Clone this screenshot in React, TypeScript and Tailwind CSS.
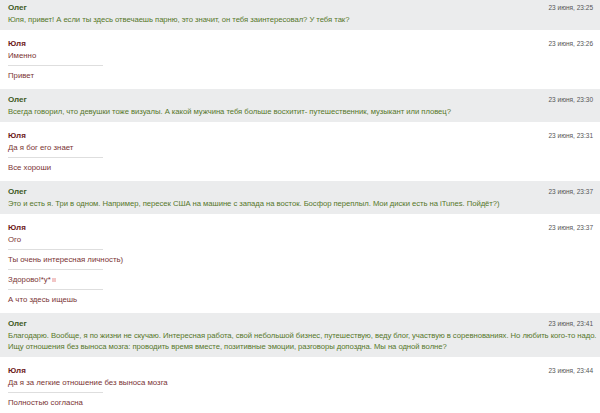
import React from 'react';

type Msg = {
  who: 'oleg' | 'yulia';
  date: string;
  lines: React.ReactNode[];
};

const messages: Msg[] = [
  { who: 'oleg', date: '23 июня, 23:25', lines: ['Юля, привет! А если ты здесь отвечаешь парню, это значит, он тебя заинтересовал? У тебя так?'] },
  { who: 'yulia', date: '23 июня, 23:26', lines: ['Именно', 'Привет'] },
  { who: 'oleg', date: '23 июня, 23:30', lines: ['Всегда говорил, что девушки тоже визуалы. А какой мужчина тебя больше восхитит- путешественник, музыкант или пловец?'] },
  { who: 'yulia', date: '23 июня, 23:31', lines: ['Да я бог его знает', 'Все хороши'] },
  { who: 'oleg', date: '23 июня, 23:37', lines: ['Это и есть я. Три в одном. Например, пересек США на машине с запада на восток. Босфор переплыл. Мои диски есть на iTunes. Пойдёт?)'] },
  {
    who: 'yulia',
    date: '23 июня, 23:37',
    lines: [
      'Ого',
      'Ты очень интересная личность)',
      <>
        Здорово!*у*
        <span className="inline-block w-[4px] h-[4px] bg-[#f2c6c6] ml-[1px] align-middle" />
      </>,
      'А что здесь ищешь',
    ],
  },
  {
    who: 'oleg',
    date: '23 июня, 23:41',
    lines: [
      'Благодарю. Вообще, я по жизни не скучаю. Интересная работа, свой небольшой бизнес, путешествую, веду блог, участвую в соревнованиях. Но любить кого-то надо.',
      'Ищу отношения без выноса мозга: проводить время вместе, позитивные эмоции, разговоры допоздна. Мы на одной волне?',
    ],
  },
  { who: 'yulia', date: '23 июня, 23:44', lines: ['Да я за легкие отношение без выноса мозга', 'Полностью согласна'] },
];

const Header = ({ name, date, color }: { name: string; date: string; color: string }) => (
  <div className="flex items-center justify-between h-[11px]">
    <span className={`font-bold text-[8px] ${color}`}>{name}</span>
    <span className="text-[6.5px] text-[#555]">{date}</span>
  </div>
);

const Message = ({ msg }: { msg: Msg }) => {
  if (msg.who === 'oleg') {
    return (
      <div className="bg-[#ebeced] pl-[8px] pr-[7px] pt-[5px] pb-[5px]">
        <Header name="Олег" date={msg.date} color="text-[#3e5a1e]" />
        <div className="mt-[1px] text-[7.7px] leading-[11px] text-[#56772a] tracking-[-0.05px]">
          {msg.lines.map((l, i) => (
            <div key={i} className="whitespace-nowrap">{l}</div>
          ))}
        </div>
      </div>
    );
  }
  return (
    <div className="bg-white pl-[8px] pr-[7px] pt-[8px] pb-[8px]">
      <Header name="Юля" date={msg.date} color="text-[#6e1c1c]" />
      <div className="mt-[1px] text-[7.8px] leading-[11px] text-[#7a3434]">
        {msg.lines.map((l, i) => (
          <div key={i} className={i > 0 ? 'mt-[4px] pt-[4px] border-t border-[#dedede] w-[95px] whitespace-nowrap' : 'whitespace-nowrap'}>
            {l}
          </div>
        ))}
      </div>
    </div>
  );
};

export default function App() {
  return (
    <div className="w-[600px] h-[413px] overflow-hidden bg-white" style={{ fontFamily: '"Liberation Sans", Arial, sans-serif' }}>
      <div className="-mt-[3px]">
        {messages.map((m, i) => (
          <Message key={i} msg={m} />
        ))}
      </div>
    </div>
  );
}
